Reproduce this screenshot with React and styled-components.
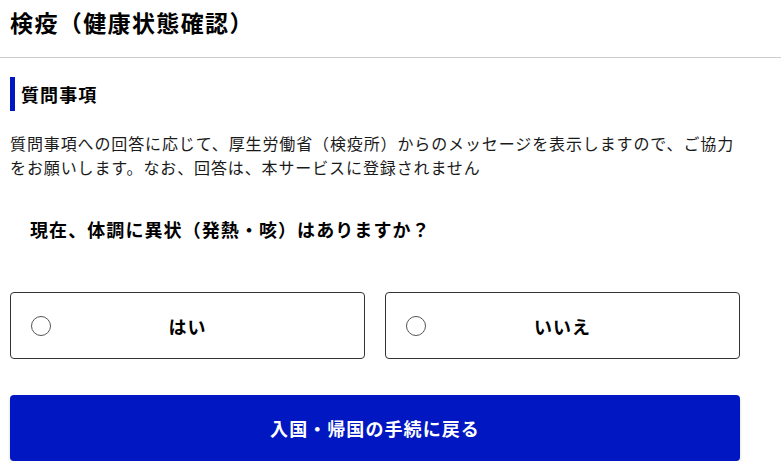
import React, { useState } from 'react';
import styled, { createGlobalStyle } from 'styled-components';

const FONT = '"Noto Sans CJK JP", "Noto Sans", sans-serif';
const BLUE = '#0017c1';

const GlobalStyle = createGlobalStyle`
  html, body {
    margin: 0;
    padding: 0;
    background: #fff;
  }
  body {
    font-family: ${FONT};
    color: #1a1a1a;
  }
  * { box-sizing: border-box; }
`;

const Page = styled.div`
  width: 781px;
`;

const Header = styled.header`
  padding: 5px 10px 18px;
  border-bottom: 1px solid #cccccc;
`;

const Title = styled.h1`
  margin: 0;
  font-size: 23px;
  line-height: 34px;
  font-weight: 700;
  letter-spacing: 0.06em;
  color: #000;
`;

const Main = styled.main`
  padding: 19px 10px 0;
  width: 750px;
`;

const SectionHeading = styled.h2`
  margin: 0;
  height: 34px;
  padding-left: 6px;
  border-left: 5px solid ${BLUE};
  font-size: 18px;
  line-height: 34px;
  font-weight: 700;
  letter-spacing: 0.06em;
  color: #000;
`;

const Lead = styled.p`
  margin: 20px 0 0;
  font-size: 16px;
  line-height: 24px;
  letter-spacing: 0.055em;
  color: #1a1a1a;
`;

const Question = styled.h3`
  margin: 37px 0 0;
  padding-left: 20px;
  font-size: 18px;
  line-height: 27px;
  font-weight: 700;
  letter-spacing: 0.06em;
  color: #000;
`;

const Options = styled.div`
  margin-top: 49px;
  display: grid;
  grid-template-columns: 1fr 1fr;
  gap: 20px;
`;

const Option = styled.label`
  height: 67px;
  display: grid;
  grid-template-columns: 20px 1fr 20px;
  align-items: center;
  padding: 0 20px;
  border: 1px solid #333;
  border-radius: 4px;
  background: #fff;
  cursor: pointer;
`;

const Radio = styled.span`
  width: 20px;
  height: 20px;
  border-radius: 50%;
  border: 1px solid #555;
  background: ${p => (p.checked ? `radial-gradient(circle, ${BLUE} 0 5px, #fff 6px)` : '#fff')};
`;

const OptionLabel = styled.span`
  text-align: center;
  font-size: 18px;
  font-weight: 700;
  letter-spacing: 0.06em;
  color: #000;
`;

const BackButton = styled.button`
  margin-top: 36px;
  width: 100%;
  height: 66px;
  border: none;
  border-radius: 4px;
  background: ${BLUE};
  color: #fff;
  font-family: ${FONT};
  font-size: 18px;
  font-weight: 700;
  letter-spacing: 0.06em;
  box-shadow: 0 2px 3px rgba(0, 0, 0, 0.18);
  cursor: pointer;
`;

const choices = ['はい', 'いいえ'];

export default function App() {
  const [answer, setAnswer] = useState(null);
  return (
    <Page>
      <GlobalStyle />
      <Header>
        <Title>検疫（健康状態確認）</Title>
      </Header>
      <Main>
        <SectionHeading>質問事項</SectionHeading>
        <Lead>
          質問事項への回答に応じて、厚生労働省（検疫所）からのメッセージを表示しますので、ご協力をお願いします。なお、回答は、本サービスに登録されません
        </Lead>
        <Question>現在、体調に異状（発熱・咳）はありますか？</Question>
        <Options>
          {choices.map(c => (
            <Option key={c} onClick={() => setAnswer(c)}>
              <Radio checked={answer === c} />
              <OptionLabel>{c}</OptionLabel>
              <span />
            </Option>
          ))}
        </Options>
        <BackButton>入国・帰国の手続に戻る</BackButton>
      </Main>
    </Page>
  );
}
